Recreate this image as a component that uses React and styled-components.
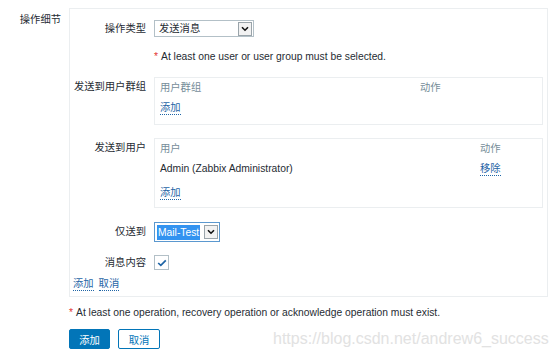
import React from "react";
import styled, { createGlobalStyle } from "styled-components";

const Global = createGlobalStyle`
  body {
    margin: 0;
    background: #fff;
    font-family: Arial, "Liberation Sans", "Noto Sans CJK SC", sans-serif;
    font-size: 10.3px;
    color: #1f2c33;
  }
`;

const Page = styled.div`
  position: relative;
  width: 554px;
  height: 359px;
  padding: 8px 6px 0 0;
  box-sizing: border-box;
`;

const FormRow = styled.div`
  display: grid;
  grid-template-columns: 61px 1fr;
  column-gap: 8px;
`;

const OuterLabel = styled.div`
  text-align: right;
  line-height: 18px;
  padding-top: 3px;
`;

const Panel = styled.div`
  border: 1px solid #ebeef0;
  padding: 11px 4px 3px 3px;
  display: flex;
  flex-direction: column;
`;

const Row = styled.div`
  display: grid;
  grid-template-columns: 73px 1fr;
  column-gap: 8px;
  align-items: ${(p) => (p.$top ? "start" : "center")};
  margin-top: ${(p) => p.$mt || 0}px;
`;

const Label = styled.div`
  text-align: right;
  line-height: ${(p) => p.$lh || 20}px;
  white-space: nowrap;
`;

const Select = styled.div`
  box-sizing: border-box;
  width: ${(p) => p.$w}px;
  height: ${(p) => p.$h}px;
  border: 1px solid ${(p) => (p.$focus ? "#5b98cf" : "#b3c0c7")};
  display: flex;
  align-items: center;
  justify-content: space-between;
  padding: 0 1px 0 3px;
  background: #fff;
`;

const Picked = styled.span`
  background: ${(p) => (p.$hl ? "#3393f0" : "transparent")};
  color: ${(p) => (p.$hl ? "#fff" : "#1f2c33")};
  line-height: 15px;
  padding: 0 1px;
  margin-left: ${(p) => (p.$hl ? "-1px" : "0")};
`;

const Arrow = styled.span`
  box-sizing: border-box;
  width: 14px;
  height: 14px;
  border: 1px solid #9aa4aa;
  background: #f2f2f2;
  display: flex;
  align-items: center;
  justify-content: center;
`;

const ErrorText = styled.div`
  line-height: 18px;
  white-space: nowrap;
  & b {
    color: #e33734;
    font-weight: normal;
    margin-right: 3px;
  }
`;

const Table = styled.div`
  border: 1px solid #ebeef0;
  padding: 0 5px ${(p) => p.$pb}px 5px;
`;

const TRow = styled.div`
  display: grid;
  grid-template-columns: ${(p) => p.$cols};
  line-height: 20px;
  margin-top: ${(p) => p.$mt || 0}px;
`;

const Head = styled.span`
  color: #768d99;
`;

const Link = styled.a`
  color: #1f65a6;
  text-decoration: none;
  border-bottom: 1px dotted #1f65a6;
  line-height: 13px;
  display: inline-block;
  margin-right: ${(p) => p.$mr || 0}px;
`;

const Check = styled.span`
  box-sizing: border-box;
  width: 15px;
  height: 15px;
  border: 1px solid #b3c0c7;
  display: flex;
  align-items: center;
  justify-content: center;
`;

const LinkRow = styled.div`
  line-height: 18px;
  margin-top: 5px;
`;

const Below = styled.div`
  padding-left: 69px;
  margin-top: 7px;
`;

const Buttons = styled.div`
  display: flex;
  gap: 8px;
  margin-top: 7px;
`;

const Button = styled.button`
  box-sizing: border-box;
  height: 20px;
  width: ${(p) => p.$w}px;
  font: inherit;
  border-radius: 2px;
  border: 1px solid #0275b8;
  background: ${(p) => (p.$primary ? "#0275b8" : "#fff")};
  color: ${(p) => (p.$primary ? "#fff" : "#0275b8")};
  padding: 0;
`;

const Watermark = styled.div`
  position: absolute;
  left: 273px;
  top: 329px;
  font-size: 16px;
  line-height: 20px;
  color: #e2e2e2;
  white-space: nowrap;
`;

const Chevron = () => (
  <svg width="8" height="6" viewBox="0 0 8 6">
    <path d="M1 1.2 L4 4.2 L7 1.2" fill="none" stroke="#111" strokeWidth="1.6" />
  </svg>
);

export default function App() {
  return (
    <Page>
      <Global />
      <FormRow>
        <OuterLabel>操作细节</OuterLabel>
        <Panel>
          <Row>
            <Label $lh={17}>操作类型</Label>
            <Select $w={100} $h={17}>
              <Picked>发送消息</Picked>
              <Arrow>
                <Chevron />
              </Arrow>
            </Select>
          </Row>
          <Row $mt={11}>
            <span />
            <ErrorText>
              <b>*</b>At least one user or user group must be selected.
            </ErrorText>
          </Row>
          <Row $top $mt={11}>
            <Label>发送到用户群组</Label>
            <Table $pb={6}>
              <TRow $cols="260px 1fr">
                <Head>用户群组</Head>
                <Head>动作</Head>
              </TRow>
              <TRow $cols="1fr">
                <span>
                  <Link>添加</Link>
                </span>
              </TRow>
            </Table>
          </Row>
          <Row $top $mt={13}>
            <Label>发送到用户</Label>
            <Table $pb={4}>
              <TRow $cols="320px 1fr">
                <Head>用户</Head>
                <Head>动作</Head>
              </TRow>
              <TRow $cols="320px 1fr">
                <span>Admin (Zabbix Administrator)</span>
                <span>
                  <Link>移除</Link>
                </span>
              </TRow>
              <TRow $cols="1fr" $mt={4}>
                <span>
                  <Link>添加</Link>
                </span>
              </TRow>
            </Table>
          </Row>
          <Row $mt={14}>
            <Label>仅送到</Label>
            <Select $w={66} $h={20} $focus>
              <Picked $hl>Mail-Test</Picked>
              <Arrow>
                <Chevron />
              </Arrow>
            </Select>
          </Row>
          <Row $mt={13}>
            <Label $lh={15}>消息内容</Label>
            <Check>
              <svg width="10" height="8" viewBox="0 0 10 8">
                <path d="M1.2 4 L3.8 6.4 L8.8 1.3" fill="none" stroke="#1f65a6" strokeWidth="1.7" />
              </svg>
            </Check>
          </Row>
          <LinkRow>
            <Link $mr={5}>添加</Link>
            <Link>取消</Link>
          </LinkRow>
        </Panel>
      </FormRow>
      <Below>
        <ErrorText>
          <b>*</b>At least one operation, recovery operation or acknowledge operation must exist.
        </ErrorText>
        <Buttons>
          <Button $primary $w={41}>添加</Button>
          <Button $w={42}>取消</Button>
        </Buttons>
      </Below>
      <Watermark>https://blog.csdn.net/andrew6_success</Watermark>
    </Page>
  );
}
